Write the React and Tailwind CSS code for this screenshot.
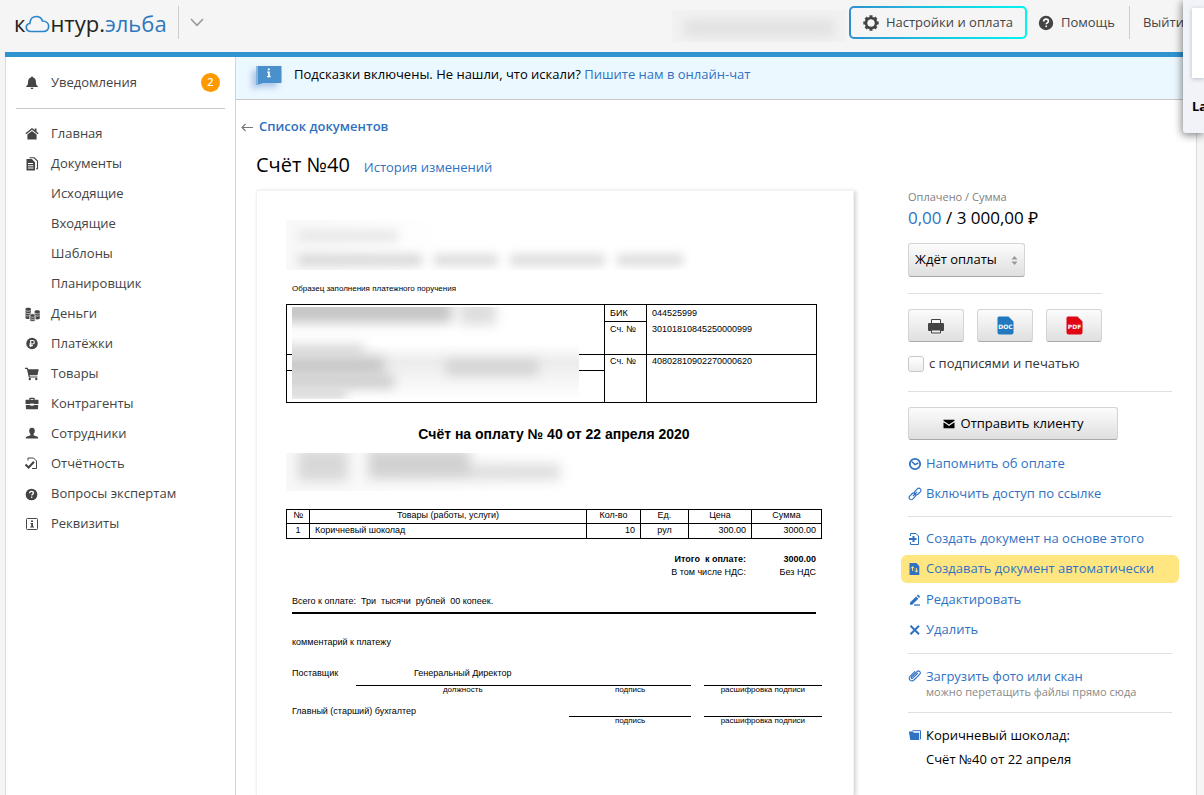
import React from "react";

/* ---------- Icons ---------- */

const Svg = ({ size = 14, className = "", children }) => (
  <svg
    width={size}
    height={size}
    viewBox="0 0 14 14"
    fill="currentColor"
    aria-hidden="true"
    className={"shrink-0 " + className}
  >
    {children}
  </svg>
);

const BellIcon = () => (
  <Svg>
    <path d="M7 0.5c.7 0 1 .5 1 1C9.900 2 10.900 3.600 10.900 5.500c0 2.500.5 3.700 1.900 4.700V11H1.200v-.8C2.600 9.200 3.100 8 3.100 5.500 3.100 3.600 4.100 2 6 1.500c0-.5.3-1 1-1z" />
    <path d="M5.400 11.800h3.200c-.2.9-.8 1.400-1.600 1.400s-1.400-.5-1.600-1.400z" />
  </Svg>
);
const HomeIcon = () => (
  <Svg>
    <path d="M7 1 .4 6.300l.9.9L7 2.700l5.700 4.500.9-.9-2.100-1.700V1.600H9.700v1.500z" />
    <path d="M7 3.900 2.400 7.500V12.500h9.200V7.500z" />
  </Svg>
);
const DocsIcon = () => (
  <Svg>
    <path d="M1.500 2h5.300L10 5.200V13.500H1.500z" />
    <path d="M3 6.500h5M3 8.800h5.500M3 11h5.500" stroke="#fff" strokeWidth="1" fill="none" />
    <path d="M4.500.8h4.700l3.300 3.300v7.700h-1.400" stroke="currentColor" strokeWidth="1.100" fill="none" />
  </Svg>
);
const MoneyIcon = () => (
  <Svg size={15}>
    <path d="M.5 1.600C.5.400 5.500.400 5.500 1.600V10.500c0 1-5 1-5 0z" />
    <path d="M9 3.700c0-1 4.800-1 4.800 0V10.800c0 1-4.800 1-4.800 0z" />
    <path d="M4.500 7.200c0-1.200 5-1.200 5 0V12.600c0 1.200-5 1.200-5 0z" stroke="#fff" strokeWidth=".8" />
    <path
      d="M.6 3.300c1 .8 3.800.8 4.800 0M.6 5.500c1 .8 3.800.8 4.800 0M.6 7.700c1 .8 3 .8 3.600.3M9.400 5.800c1 .7 3.400.7 4.300 0M10 8c1 .6 3 .5 3.700 0M5 9c1 .8 3.200.8 4.100 0M5 11c1 .8 3.200.8 4.100 0"
      stroke="#fff"
      strokeWidth=".6"
      fill="none"
    />
  </Svg>
);
const RoubleIcon = () => (
  <Svg>
    <circle cx="7" cy="6.500" r="5.700" />
    <path d="M5.700 10V3.500h1.900a1.700 1.700 0 0 1 0 3.500H4.300M4.300 8.600h3.500" stroke="#fff" strokeWidth="1.100" fill="none" />
  </Svg>
);
const CartIcon = () => (
  <Svg>
    <path d="M0 .8h2.700l.5 1.500H13.800L12.400 8.300H4.600l.3 1.200h7.400v1.100H3.800L1.900 1.900H0z" />
    <circle cx="4.800" cy="12" r="1.200" />
    <circle cx="11.300" cy="12" r="1.200" />
  </Svg>
);
const CaseIcon = () => (
  <Svg>
    <path d="M4.300 2.800V1.600c0-.5.300-.8.800-.8h3.800c.5 0 .8.300.8.800v1.200h2.800c.6 0 1 .4 1 1V7H8.600v-.5H5.400V7H.5V3.800c0-.6.400-1 1-1zM5.400 1.900v.9h3.200v-.9z" />
    <path d="M.9 7.900h4.500v.9h3.200v-.9h4.500v3.400c0 .6-.4 1-1 1H1.900c-.6 0-1-.4-1-1z" />
  </Svg>
);
const PersonIcon = () => (
  <Svg>
    <path d="M7 .8c1.800 0 2.800 1.200 2.800 2.900 0 1.400-.6 2.800-1.300 3.500v1.100l3.500 1.300c.8.300 1.200.9 1.200 1.900H.8c0-1 .4-1.600 1.200-1.900l3.500-1.300V7.200C4.800 6.500 4.200 5.100 4.200 3.700 4.200 2 5.200.8 7 .8z" />
  </Svg>
);
const ReportIcon = () => (
  <Svg>
    <path d="M3 3.500V1h5.500l3 3v7.500H7" stroke="currentColor" strokeWidth="1" fill="none" />
    <path d="M.5 7.500 3.600 10.500 9 4.700" stroke="currentColor" strokeWidth="2" fill="none" />
  </Svg>
);
const QuestionIcon = ({ size }) => (
  <Svg size={size}>
    <circle cx="7" cy="7" r="6.300" />
    <path d="M5 5.600c0-1.200.8-2 2-2s2.100.7 2.100 1.800c0 1.400-1.900 1.400-1.900 2.800" stroke="#fff" strokeWidth="1.400" fill="none" />
    <rect x="6.500" y="9.200" width="1.400" height="1.400" fill="#fff" />
  </Svg>
);
const InfoSquareIcon = () => (
  <Svg>
    <rect x="1.500" y="1.500" width="11" height="11" rx="1" fill="none" stroke="currentColor" />
    <path d="M6 3.500h2v1.500H6zM5.500 6H8v3.500h1v1H5.200v-1h1V7h-.7z" />
  </Svg>
);
const GearIcon = () => (
  <svg width="16" height="16" viewBox="0 0 16 16" aria-hidden="true" className="shrink-0">
    <circle cx="8" cy="8" r="4.900" fill="none" stroke="currentColor" strokeWidth="2.800" />
    <path
      d="M8 .3v3M8 12.700v3M.3 8h3M12.700 8h3M2.600 2.600l2 2M11.400 11.400l2 2M2.600 13.400l2-2M11.400 4.600l2-2"
      stroke="currentColor"
      strokeWidth="3"
    />
    <circle cx="8" cy="8" r="3.500" fill="#f5f5f5" />
  </svg>
);
const PrinterIcon = () => (
  <svg width="18" height="16" viewBox="0 0 18 16" aria-hidden="true" className="text-[#444]">
    <path d="M4.500 5.500V1.500h9v4" fill="#f8f8f8" stroke="currentColor" strokeWidth="1" />
    <rect x="1" y="5" width="16" height="8" rx="1" fill="currentColor" />
    <path d="M4.500 12h9v3h-9z" fill="#eee" stroke="currentColor" strokeWidth="1" />
    <path d="M3.500 11.500h11" stroke="currentColor" strokeWidth="1" />
  </svg>
);
const FileIcon = ({ label, color }) => (
  <svg width="17" height="19" viewBox="0 0 17 19" aria-hidden="true">
    <path d="M2 .5h9.500l5 5V16.500a2 2 0 0 1-2 2H2.500a2 2 0 0 1-2-2V2A1.500 1.500 0 0 1 2 .5z" fill={color} />
    <text
      x="8.500"
      y="12.500"
      textAnchor="middle"
      fill="#fff"
      fontSize="6"
      fontWeight="700"
      fontFamily="DejaVu Sans, sans-serif"
    >
      {label}
    </text>
  </svg>
);
const MailIcon = () => (
  <svg width="12" height="10" viewBox="0 0 12 10" aria-hidden="true" fill="#000">
    <path d="M.5.800h11v.9L6 5.600.5 1.700z" />
    <path d="M.5 3.200 6 7l5.500-3.800V9.200H.5z" />
  </svg>
);
const ClockIcon = () => (
  <Svg>
    <circle cx="7" cy="7" r="5.200" fill="none" stroke="currentColor" strokeWidth="1.800" />
    <path d="M4 4.800 7 7.600 10.300 6" fill="none" stroke="currentColor" strokeWidth="1.500" />
  </Svg>
);
const ChainIcon = () => (
  <Svg>
    <g fill="none" stroke="currentColor" strokeWidth="1.200">
      <rect x="5.800" y="2.500" width="7.600" height="4.200" rx="2.100" transform="rotate(-45 9.600 4.600)" />
      <rect x=".6" y="7.300" width="7.600" height="4.200" rx="2.100" transform="rotate(-45 4.400 9.400)" />
      <path d="M5 9l4-4" />
    </g>
  </Svg>
);
const DocInIcon = () => (
  <Svg>
    <path d="M2.500 4V1.500H8L10.500 4V12.500H2.500V10" fill="none" stroke="currentColor" />
    <path d="M1 7h7.500M5.500 4V10" stroke="currentColor" strokeWidth="2" />
  </Svg>
);
const DocAutoIcon = () => (
  <Svg>
    <path d="M1.500 1h6.800l3 3V13H1.500z" />
    <path d="M4.600 8.800V4.800M3 6.300l1.600-1.600 1.500 1.600M8.400 6v4M6.800 8.500l1.600 1.600L10 8.500" stroke="#ffe681" strokeWidth="1" fill="none" />
  </Svg>
);
const PencilIcon = () => (
  <Svg>
    <path d="M2 9.600 8.100 3.500l2.200 2.200L4.200 11.800H2zM8.800 2.800l1.200-1.200 2.200 2.200L11 5z" />
    <path d="M6 12h6" stroke="currentColor" strokeWidth="1.300" />
  </Svg>
);
const CrossIcon = () => (
  <Svg>
    <path d="M2.500 2.800l8.500 8.400M11 2.800 2.500 11.200" stroke="currentColor" strokeWidth="2" />
  </Svg>
);
const ClipIcon = () => (
  <Svg>
    <path
      d="M9.800 4 4.600 9.200c-.8.800-2-.3-1.200-1.200l5.700-5.500c1.800-1.700 4.500.9 2.700 2.700L6 11c-2.600 2.500-6.500-1-4-3.700L7 2.400"
      fill="none"
      stroke="currentColor"
      strokeWidth="1.100"
    />
  </Svg>
);
const FolderIcon = () => (
  <Svg>
    <path d="M4.500 2.700h8v8.600" fill="none" stroke="currentColor" strokeWidth="1" />
    <path d="M.8 3.500h4l1 1.200h5.400v7.300H2.300z" />
  </Svg>
);

/* ---------- Building blocks ---------- */

const NAV = [
  { label: "Главная", icon: <HomeIcon /> },
  { label: "Документы", icon: <DocsIcon /> },
  { label: "Исходящие" },
  { label: "Входящие" },
  { label: "Шаблоны" },
  { label: "Планировщик" },
  { label: "Деньги", icon: <MoneyIcon /> },
  { label: "Платёжки", icon: <RoubleIcon /> },
  { label: "Товары", icon: <CartIcon /> },
  { label: "Контрагенты", icon: <CaseIcon /> },
  { label: "Сотрудники", icon: <PersonIcon /> },
  { label: "Отчётность", icon: <ReportIcon /> },
  { label: "Вопросы экспертам", icon: <QuestionIcon size={13} /> },
  { label: "Реквизиты", icon: <InfoSquareIcon /> },
];

function Action({ icon, children }) {
  return (
    <a href="#" className="flex h-[30px] items-center gap-1 text-[#2f72c4]">
      {icon}
      <span className="whitespace-nowrap">{children}</span>
    </a>
  );
}

const Rule = ({ className = "" }) => <hr className={"border-t border-[#e0e0e0] " + className} />;

const raised =
  "rounded-[3px] border border-[#d4d4d4] border-b-[#a8a8a8] bg-linear-to-b from-[#fcfcfc] to-[#dfdfdf]";

function Header() {
  return (
    <header className="flex h-[52px] items-start pt-[6px] pr-5 pl-[14px]">
      <a href="#" aria-label="контур.эльба" className="flex h-[33px] items-center text-[22px] leading-8 text-[#222]">
        <span>к</span>
        <svg width="25" height="20" viewBox="0 0 25 20" aria-hidden="true" className="mt-[2px]">
          <path
            d="M6 17.500C3 17.500 1.300 15.600 1.300 13.400c0-2 1.500-3.600 3.500-3.900C5 5.300 7.600 2.500 11.300 2.500c3 0 5.300 1.700 6.200 4.500 3.500.1 6.200 2.300 6.200 5.300 0 3-2.300 5.200-5.400 5.200z"
            fill="none"
            stroke="#2b87c9"
            strokeWidth="1.700"
          />
        </svg>
        <span>нтур.</span>
        <span className="text-[#2f78bd]">эльба</span>
      </a>
      <div className="ml-[11px] h-[33px] border-l border-[#ccc]" />
      <button type="button" aria-label="Сервисы" className="flex h-[33px] items-center pl-[11px]">
        <svg width="14" height="9" viewBox="0 0 14 9" fill="none" stroke="#999" strokeWidth="1.600" aria-hidden="true">
          <path d="M1 1l6 6.300L13 1" />
        </svg>
      </button>
      <div className="mt-[4px] mr-[3px] ml-auto flex h-8 w-[174px] items-center overflow-hidden bg-[#f2f2f2] px-3">
        <div className="mt-1 h-[16px] w-full bg-[#e0e0e0] blur-[6px]" />
      </div>
      <div className="rounded-[5px] bg-linear-to-r from-[#2f8fcf] via-[#15c8e0] to-[#00f5f0] p-[2px]">
        <button
          type="button"
          className="flex h-[29px] items-center gap-[7px] rounded-[3px] bg-[#f5f5f5] px-3 text-[13px] text-[#444]"
        >
          <GearIcon />
          Настройки и оплата
        </button>
      </div>
      <a href="#" className="ml-[11px] flex h-[33px] items-center gap-[7px] text-[13px] text-[#444]">
        <QuestionIcon size={16} />
        Помощь
      </a>
      <div className="mr-[13px] ml-[14px] h-[33px] border-l border-[#ccc]" />
      <a href="#" className="flex h-[33px] items-center text-[13px] text-[#444]">
        Выйти
      </a>
    </header>
  );
}

function Sidebar() {
  return (
    <nav className="w-[230px] shrink-0 border-r border-[#d4d4d4] px-[10px] text-[13px] text-[#444]">
      <a href="#" className="flex h-[52px] items-center border-b border-[#c8c8c8] pr-[5px] pl-[9px]">
        <span className="w-[26px]">
          <BellIcon />
        </span>
        <span>Уведомления</span>
        <span className="ml-auto flex size-[19px] items-center justify-center rounded-full bg-[#ff9900] text-[11px] font-semibold text-white">
          2
        </span>
      </a>
      <ul className="pt-[10px]">
        {NAV.map((n) => (
          <li key={n.label}>
            <a href="#" className="flex h-[30px] items-center pl-[9px]">
              <span className="w-[26px]">{n.icon}</span>
              <span>{n.label}</span>
            </a>
          </li>
        ))}
      </ul>
    </nav>
  );
}

const cell = "border border-black px-[5px] font-normal";
const caption = "text-[8px] leading-[8px]";

function Invoice() {
  return (
    <article className="flex-1 border border-b-0 border-[#f2f2f2] bg-white pt-[29px] pr-[31px] pl-[29px] font-['Liberation_Sans',Arial,sans-serif] text-[9px] leading-[12px] text-black shadow-[2px_1px_4px_rgba(0,0,0,0.18)]">
      <div className="flex h-[50px] flex-col justify-end gap-[12px] overflow-hidden bg-linear-to-r from-[#f9f9f9] to-white to-30% px-3 pb-1">
        <div className="h-[12px] w-[100px] bg-[#e8e8e8] blur-[5px]" />
        <div className="flex gap-3 blur-[5px]">
          <div className="h-[12px] w-[124px] bg-[#dadada]" />
          <div className="h-[12px] w-[64px] bg-[#dedede]" />
          <div className="h-[12px] w-[95px] bg-[#dedede]" />
          <div className="h-[12px] w-[66px] bg-[#dedede]" />
        </div>
      </div>

      <p className="mt-[13px] px-[6px] text-[8px]">Образец заполнения платежного поручения</p>

      <div className="relative mt-[9px] mr-[5px]">
        <table className="w-full table-fixed border-collapse text-left align-top">
          <colgroup>
            <col />
            <col className="w-[42px]" />
            <col className="w-[170px]" />
          </colgroup>
          <tbody className="align-top">
            <tr className="h-[17px]">
              <td className={cell} rowSpan={2}></td>
              <td className={cell + " pt-[2px]"}>БИК</td>
              <td className="border-x border-t border-black px-[5px] pt-[2px]">044525999</td>
            </tr>
            <tr className="h-[33px]">
              <td className={cell + " pt-[1px]"}>Сч. №</td>
              <td className="border-x border-b border-black px-[5px] pt-[1px]">30101810845250000999</td>
            </tr>
            <tr className="h-[16px]">
              <td className={cell}></td>
              <td className={cell} rowSpan={2}>Сч. №</td>
              <td className={cell} rowSpan={2}>40802810902270000620</td>
            </tr>
            <tr className="h-[32px]">
              <td className={cell}></td>
            </tr>
          </tbody>
        </table>
        <div className="absolute top-[3px] left-[6px] flex h-[92px] w-[287px] flex-col overflow-hidden bg-linear-to-b from-white from-40% via-[#ececec] via-60% to-white">
          <div className="-mt-2 flex gap-2 blur-[6px]">
            <div className="-ml-3 h-[24px] w-[172px] bg-[#c6c6c6]" />
            <div className="h-[26px] w-[36px] bg-[#dedede]" />
          </div>
          <div className="mt-[19px] -ml-3 h-[14px] w-[84px] bg-[#dadada] blur-[6px]" />
          <div className="flex items-start gap-[62px] blur-[6px]">
            <div className="-ml-3 h-[18px] w-[104px] bg-[#c8c8c8]" />
            <div className="mt-[3px] h-[15px] w-[92px] bg-[#d2d2d2]" />
          </div>
          <div className="-ml-3 h-[14px] w-[114px] bg-[#cbcbcb] blur-[6px]" />
          <div className="-ml-3 h-[12px] w-[66px] bg-[#d8d8d8] blur-[5px]" />
        </div>
      </div>

      <h2 className="mt-[21px] text-center text-[14px] leading-[20px] font-bold">
        Счёт на оплату № 40 от 22 апреля 2020
      </h2>

      <div className="mt-[9px] h-[38px] overflow-hidden bg-linear-to-r from-[#f8f8f8] to-white to-55% px-3">
        <div className="-mt-1 flex gap-5 blur-[6px]">
          <div className="h-[32px] w-[50px] bg-[#d8d8d8]" />
          <div className="h-[30px] w-[102px] bg-[#d2d2d2]" />
          <div className="-ml-5 mt-[15px] h-[16px] w-[90px] bg-[#dedede]" />
        </div>
      </div>

      <table className="mt-[18px] w-full table-fixed border-collapse">
        <colgroup>
          <col className="w-[23px]" />
          <col />
          <col className="w-[54px]" />
          <col className="w-[48px]" />
          <col className="w-[63px]" />
          <col className="w-[70px]" />
        </colgroup>
        <thead className="leading-[11px]">
          <tr className="h-[14px]">
            <th className={cell + " pb-[2px]"}>№</th>
            <th className={cell + " pb-[2px]"}>Товары (работы, услуги)</th>
            <th className={cell + " pb-[2px]"}>Кол-во</th>
            <th className={cell + " pb-[2px]"}>Ед.</th>
            <th className={cell + " pb-[2px]"}>Цена</th>
            <th className={cell + " pb-[2px]"}>Сумма</th>
          </tr>
        </thead>
        <tbody className="leading-[11px]">
          <tr className="h-[15px]">
            <td className={cell + " pb-[2px] text-center"}>1</td>
            <td className={cell + " pb-[2px]"}>Коричневый шоколад</td>
            <td className={cell + " pb-[2px] text-right"}>10</td>
            <td className={cell + " pb-[2px] text-center"}>рул</td>
            <td className={cell + " pb-[2px] text-right"}>300.00</td>
            <td className={cell + " pb-[2px] text-right"}>3000.00</td>
          </tr>
        </tbody>
      </table>

      <dl className="mt-[14px] grid grid-cols-[1fr_70px] pr-[6px] text-right leading-[13px]">
        <dt className="font-bold">Итого&nbsp; к оплате:</dt>
        <dd className="font-bold">3000.00</dd>
        <dt>В том числе НДС:</dt>
        <dd>Без НДС</dd>
      </dl>

      <div className="mr-[6px] ml-[6px]">
        <p className="mt-[16px] border-b-2 border-black pb-[5px]">
          Всего к оплате:&nbsp; Три&nbsp; тысячи&nbsp; рублей&nbsp; 00 копеек.
        </p>
        <p className="mt-[22px]">комментарий к платежу</p>
      </div>

      <div className="mt-[19px] ml-[6px] grid grid-cols-[64px_213fr_121fr_13px_118fr] text-center">
        <span className="pb-[6px] text-left">Поставщик</span>
        <span className="border-b border-black pb-[6px]">Генеральный Директор</span>
        <span className="border-b border-black" />
        <span />
        <span className="border-b border-black" />
        <span />
        <span className={caption}>должность</span>
        <span className={caption}>подпись</span>
        <span />
        <span className={caption}>расшифровка подписи</span>
        <span className="col-span-2 mt-[11px] text-left">Главный (старший) бухгалтер</span>
        <span className="border-b border-black" />
        <span />
        <span className="border-b border-black" />
        <span className="col-span-2" />
        <span className={caption}>подпись</span>
        <span />
        <span className={caption}>расшифровка подписи</span>
      </div>
    </article>
  );
}

function Actions() {
  return (
    <aside className="w-[264px] shrink-0 text-[13px]">
      <p className="text-[11px] leading-[14px] text-[#808080]">Оплачено / Сумма</p>
      <p className="text-[17px] leading-7 text-black">
        <a href="#" className="text-[#2f72c4]">0,00</a> / 3 000,00 ₽
      </p>

      <div className="relative mt-[11px] w-[117px]">
        <select aria-label="Статус" className={raised + " h-[34px] w-full appearance-none pl-[6px] text-black"}>
          <option>Ждёт оплаты</option>
          <option>Оплачен</option>
        </select>
        <svg
          width="7"
          height="9"
          viewBox="0 0 7 9"
          fill="#999"
          aria-hidden="true"
          className="pointer-events-none absolute top-[13px] right-[7px]"
        >
          <path d="M3.500 0 6.500 3.500H.5zM3.500 9 .5 5.500h6z" />
        </svg>
      </div>

      <Rule className="mt-[16px] w-[194px]" />

      <div className="mt-[15px] flex gap-[13px]">
        <button type="button" aria-label="Печать" className={raised + " flex h-[33px] w-14 items-center justify-center"}>
          <PrinterIcon />
        </button>
        <button type="button" aria-label="Скачать DOC" className={raised + " flex h-[33px] w-14 items-center justify-center"}>
          <FileIcon label="DOC" color="#2279c0" />
        </button>
        <button type="button" aria-label="Скачать PDF" className={raised + " flex h-[33px] w-14 items-center justify-center"}>
          <FileIcon label="PDF" color="#e00613" />
        </button>
      </div>

      <label className="mt-[12px] flex h-5 items-center gap-[5px] text-[#333]">
        <input
          type="checkbox"
          className="size-4 appearance-none rounded-[3px] border border-[#c8c8c8] bg-linear-to-b from-white to-[#ececec]"
        />
        с подписями и печатью
      </label>

      <Rule className="mt-[17px]" />

      <button
        type="button"
        className={raised + " mt-[15px] mb-[9px] flex h-[33px] w-[210px] items-center justify-center gap-[6px] text-black"}
      >
        <MailIcon />
        Отправить клиенту
      </button>

      <Action icon={<ClockIcon />}>Напомнить об оплате</Action>
      <Action icon={<ChainIcon />}>Включить доступ по ссылке</Action>
      <Rule className="mt-[7px] mb-[7px]" />
      <Action icon={<DocInIcon />}>Создать документ на основе этого</Action>
      <div className="-mx-[7px] mt-px flex h-7 items-center rounded-[6px] bg-[#ffe681] px-[7px]">
        <Action icon={<DocAutoIcon />}>Создавать документ автоматически</Action>
      </div>
      <div className="mt-[2px] flex flex-col">
        <Action icon={<PencilIcon />}>Редактировать</Action>
        <Action icon={<CrossIcon />}>Удалить</Action>
      </div>
      <Rule className="mt-[8px]" />
      <a href="#" className="mt-[12px] flex gap-1 leading-5 text-[#2f72c4]">
        <span className="pt-[3px]">
          <ClipIcon />
        </span>
        Загрузить фото или скан
      </a>
      <p className="pl-[18px] text-[11px] leading-3 text-[#888]">можно перетащить файлы прямо сюда</p>
      <Rule className="mt-[14px]" />
      <div className="mt-[10px] flex gap-1 leading-6 text-black">
        <span className="pt-[5px] text-[#2f72c4]">
          <FolderIcon />
        </span>
        <p>
          Коричневый шоколад:
          <br />
          Счёт №40 от 22 апреля
        </p>
      </div>
    </aside>
  );
}

export default function App() {
  return (
    <div className="relative flex min-h-screen flex-col overflow-hidden bg-[#f5f5f5] font-['Open_Sans','Noto_Sans',sans-serif]">
      <Header />
      <div className="mr-[7px] ml-[5px] flex flex-1 flex-col border-t-[5px] border-[#2f93d0]">
        <div className="flex flex-1 border-x border-[#dcdcdc] bg-white">
          <Sidebar />
          <main className="flex min-w-0 flex-1 flex-col">
            <div className="flex h-[43px] items-center gap-3 border-b border-[#c8c8c8] bg-[#ecf8ff] pb-[6px] pl-5 text-[13px] text-black">
              <svg
                width="26"
                height="20"
                viewBox="0 0 26 20"
                aria-hidden="true"
                className="overflow-visible drop-shadow-[-4px_4px_3px_rgba(90,130,200,0.45)]"
              >
                <path d="M.5 1h25v17H7L.5 20z" fill="#4a90cc" />
                <path d="M.5 1H2v18.500L.5 20z" fill="#86b8e0" />
                <path d="M11.800 3.500h2v1.700h-2zM11 6.500h2.800v4.600h1v1.200H11v-1.200h1V7.700h-1z" fill="#fff" />
              </svg>
              <p>
                Подсказки включены. Не нашли, что искали?{" "}
                <a href="#" className="text-[#2f72c4]">Пишите нам в онлайн-чат</a>
              </p>
            </div>
            <a href="#" className="mt-[17px] flex h-5 items-center gap-[6px] pl-[5px] text-[13px] font-semibold text-[#2f6fbf]">
              <svg width="12" height="9" viewBox="0 0 12 9" fill="none" stroke="#777" strokeWidth="1.100" aria-hidden="true">
                <path d="M12 4.500H1M4.500 1 1 4.500 4.500 8" />
              </svg>
              Список документов
            </a>
            <div className="mt-[12px] flex items-baseline gap-[14px] pl-5">
              <h1 className="text-[20px] leading-8 text-black">Счёт №40</h1>
              <a href="#" className="text-[13px] text-[#2f72c4]">История изменений</a>
            </div>
            <div className="mt-[9px] flex flex-1 gap-[54px] pr-6 pl-5">
              <Invoice />
              <Actions />
            </div>
          </main>
        </div>
      </div>

      <div className="absolute top-0 right-0 h-[133px] w-[21px] rounded-bl-[3px] bg-[#f1f3f8] pt-2 pl-[9px] shadow-[-1px_2px_8px_rgba(0,0,0,0.5)]">
        <div className="h-[70px] bg-white shadow-[0_1px_4px_rgba(80,110,140,0.4)]" />
        <p className="mt-[18px] overflow-hidden text-[13px] leading-5 font-bold text-black">La</p>
      </div>
    </div>
  );
}
